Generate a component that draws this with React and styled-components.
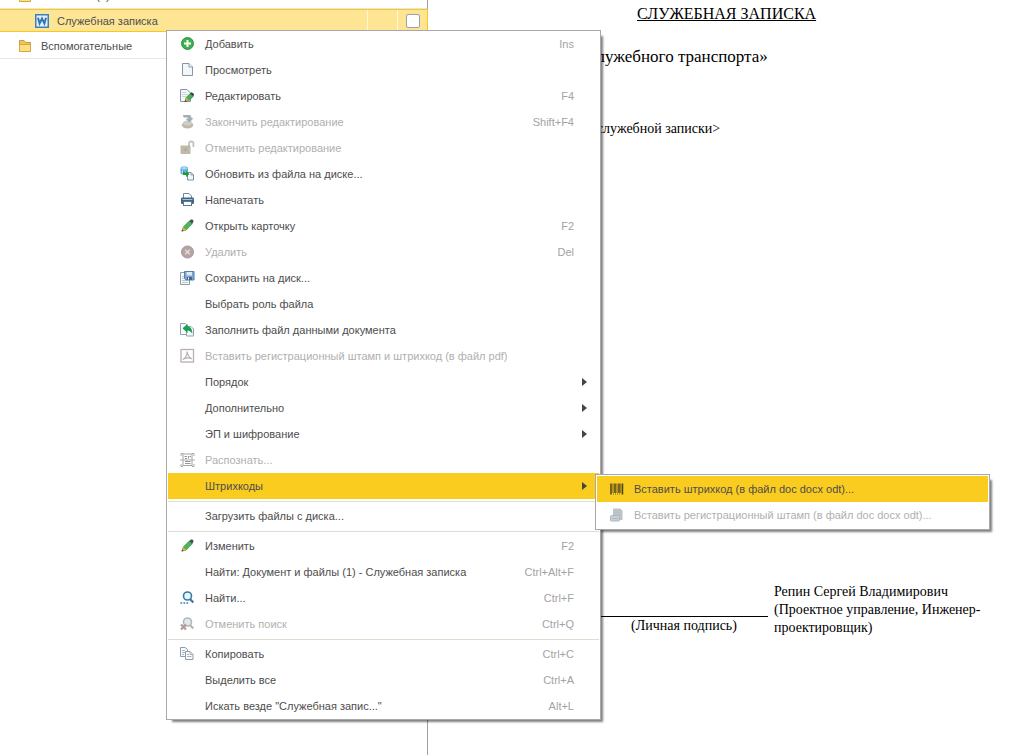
import React from 'react';
import styled, { createGlobalStyle, css } from 'styled-components';

const AddIcon = () => (
  <svg width="16" height="16" viewBox="0 0 16 16">
    <circle cx="7.500" cy="7.500" r="6" fill="#3fae4c" stroke="#2f9440" />
    <path d="M7.500 4v7M4 7.500h7" stroke="#fff" strokeWidth="2" />
  </svg>
);

const PageIcon = () => (
  <svg width="16" height="16" viewBox="0 0 16 16">
    <path d="M2.500 1.500h6.500L12.500 5v8.500h-10z" fill="#f4f7f9" stroke="#8796a5" />
    <path d="M9 1.500V5h3.500" fill="#fff" stroke="#8796a5" />
  </svg>
);

const EditPageIcon = () => (
  <svg width="16" height="16" viewBox="0 0 16 16">
    <path d="M.5 1.500H7L10.500 5v8.500H.5z" fill="#f4f7f9" stroke="#8796a5" />
    <path d="M2 4.500h4M2 6.500h6M2 8.500h4" stroke="#cdd5db" />
    <path d="M5 13.500l1.200-4 4.300-4.300 3 3-4.500 4.300z" fill="#48ae55" stroke="#2c7a3b" strokeWidth=".6" />
    <path d="M10 5.500l1.500-1.300q1.500.2 2.700 2.300L13 8.300z" fill="#31465a" />
    <path d="M5 13.500l1.200-4 3 3z" fill="#e9a13d" />
    <path d="M4.700 13.900l.5-1.800 1.400 1.300z" fill="#333" />
  </svg>
);

const FinishIcon = () => (
  <svg width="16" height="16" viewBox="0 0 16 16">
    <ellipse cx="7.500" cy="11" rx="5.800" ry="3.500" fill="#bdb9ab" />
    <ellipse cx="7.500" cy="9" rx="4.500" ry="2.500" fill="#d0cdc2" />
    <path d="M3 1h6.500q2 .2 2 3.300h2L9.500 8.500 5.500 4.800h2.500Q8 3.500 6.500 3.500H3.500z" fill="#a1aeb7" />
  </svg>
);

const UnlockIcon = () => (
  <svg width="16" height="16" viewBox="0 0 16 16">
    <path d="M9 7V3.500q0-2 2.200-2t2.200 2V7" fill="none" stroke="#c2c2be" strokeWidth="1.800" />
    <rect x=".5" y="5.500" width="10" height="8.500" rx=".8" fill="#bfb9aa" />
    <path d="M5.500 8.500V11" stroke="#a8a192" strokeWidth="1.500" />
  </svg>
);

const RefreshIcon = () => (
  <svg width="16" height="16" viewBox="0 0 16 16">
    <rect x=".5" y=".5" width="7.500" height="8" rx="2" fill="#5eacdc" />
    <ellipse cx="4.200" cy="2.200" rx="3" ry="1.300" fill="#a9daf4" />
    <path d="M2.500 4.500V7M4.500 5v1.500" stroke="#c8e8f7" />
    <path d="M7.500 6.500H11L13.500 9v5h-6z" fill="#f4f7f9" stroke="#7d90a3" />
    <path d="M11 6.500V9h2.500" fill="none" stroke="#7d90a3" strokeWidth=".8" />
    <path d="M4 5.500v2.500h3" fill="none" stroke="#1d9c35" strokeWidth="1.800" />
    <path d="M6 5l3.500 3L6 11z" fill="#1d9c35" />
  </svg>
);

const PrintIcon = () => (
  <svg width="16" height="16" viewBox="0 0 16 16">
    <path d="M3.500 6V1.500H9L11.500 4v2" fill="#fff" stroke="#72889d" />
    <rect x="1" y="5.500" width="13" height="6.500" rx="1.300" fill="#416787" />
    <path d="M2.500 7.500h10" stroke="#a4bfd2" />
    <rect x="3.500" y="9.500" width="8" height="4" fill="#fff" stroke="#5c7890" />
  </svg>
);

const PencilIcon = () => (
  <svg width="16" height="16" viewBox="0 0 16 16">
    <path d="M2 13l1.200-4 6-6 3 3-6 6z" fill="#4bb656" stroke="#3a8745" strokeWidth=".6" />
    <path d="M9.200 3l1.700-1.500q1.500-.3 2.100.3t.4 2L12.200 6z" fill="#41515e" />
    <path d="M1.800 13.200l1.300-4.200 3.200 3z" fill="#eda74b" />
    <path d="M1.500 13.500l.6-2 1.500 1.400z" fill="#4b4034" />
  </svg>
);

const DeleteIcon = () => (
  <svg width="16" height="16" viewBox="0 0 16 16">
    <circle cx="7.500" cy="8" r="6" fill="#b5a4a4" stroke="#a99999" />
    <path d="M5.200 5.700l4.600 4.600M9.800 5.700l-4.600 4.600" stroke="#e4dcdc" strokeWidth="1.400" />
  </svg>
);

const SavePageIcon = () => (
  <svg width="16" height="16" viewBox="0 0 16 16">
    <path d="M.5 2.500h9v12h-9z" fill="#f7f9fa" stroke="#8c9cac" />
    <path d="M2 6.500h3M2 8.500h3M2 10.500h5M2 12.500h6" stroke="#bcc8d1" />
    <path d="M4.500 1.500h9.500V10H6L4.500 8.500z" fill="#7ba7d2" stroke="#5580ab" />
    <rect x="6.500" y="2" width="5.500" height="3.500" fill="#dbe9f5" />
    <rect x="7" y="7" width="5" height="3" fill="#46678a" />
    <path d="M8.500 7.500v2" stroke="#fff" />
  </svg>
);

const FillIcon = () => (
  <svg width="16" height="16" viewBox="0 0 16 16">
    <path d="M.5 1.500h5L8 4v8.500H.5z" fill="#f7f9fa" stroke="#93a1af" />
    <path d="M6.500 4.500H11L13.500 7v7h-7z" fill="#f7f9fa" stroke="#93a1af" />
    <path d="M2.500 6.300L7.500 2v2.600q5 .3 4.800 7.400-1.500-3.500-4.800-3.500V11z" fill="#16a052" />
  </svg>
);

const PdfIcon = () => (
  <svg width="16" height="16" viewBox="0 0 16 16">
    <rect x="1" y="1.500" width="12.500" height="12.500" fill="#fff" stroke="#baaeae" strokeWidth="1.300" />
    <path d="M2.800 11.500Q7 9.500 7.200 3.500q.5 5.500 4.800 7.300-4.700-2-9.200.7z" fill="none" stroke="#baaeae" strokeWidth="1.200" />
  </svg>
);

const ScanIcon = () => (
  <svg width="16" height="16" viewBox="0 0 16 16">
    <path d="M1 4V1.500h2M12 1.500h2V4M1 12v2.500h2M12 14.500h2V12" fill="none" stroke="#aaa" />
    <rect x="3" y="2" width="9" height="11.500" fill="#fff" stroke="#a5a5a5" />
    <path d="M4.500 4.500H7M8.500 4v2.500M9.500 4.500h1.500M5 6.500h2M5 9.500h5.500M5 11.500h5.500" stroke="#959595" />
    <path d="M0 8h15" stroke="#b9a9a9" />
  </svg>
);

const SearchIcon = () => (
  <svg width="16" height="16" viewBox="0 0 16 16">
    <circle cx="7.500" cy="6" r="4" fill="#edf5fa" stroke="#367ba8" strokeWidth="1.600" />
    <path d="M10 9l3.300 3.500" stroke="#367ba8" strokeWidth="2.200" />
    <path d="M.5 13h1.700M3.500 13h1.700M6.500 13h1.700" stroke="#367ba8" strokeWidth="1.500" />
  </svg>
);

const SearchOffIcon = () => (
  <svg width="16" height="16" viewBox="0 0 16 16">
    <circle cx="7.500" cy="6" r="4" fill="#e4e8ea" stroke="#b1b9be" strokeWidth="1.600" />
    <path d="M10 9l3.300 3.500" stroke="#b1b9be" strokeWidth="2.200" />
    <path d="M1 8.500l5 5M6 8.500l-5 5" stroke="#b29a98" strokeWidth="2.200" />
  </svg>
);

const CopyIcon = () => (
  <svg width="16" height="16" viewBox="0 0 16 16">
    <path d="M.5 1.500h4.500l2.500 2v7h-7z" fill="#f8fafb" stroke="#8d9baa" />
    <path d="M2 4.500h3M2 6.500h3M2 8.500h2" stroke="#a9b5c0" />
    <path d="M5.500 5.500h4.500l3 3v5H5.500z" fill="#f8fafb" stroke="#8d9baa" />
    <path d="M10 5.500v3h3M7 8.500h2M7 10.500h4.500" fill="none" stroke="#a9b5c0" />
  </svg>
);

const BarcodeIcon = () => (
  <svg width="16" height="16" viewBox="0 0 16 16">
    <path d="M2 2.500V13.500M6 2.500v9.500M10 2.500v9.500M13.500 2.500V13.500" stroke="#4c431c" strokeWidth="1.500" />
    <path d="M4 2.500v9.500M8 2.500v9.500M11.800 2.500v9.500" stroke="#4c431c" strokeWidth=".8" />
    <path d="M4 13h8.500" stroke="#7a6a20" strokeDasharray="1 1" />
  </svg>
);

const StampIcon = () => (
  <svg width="16" height="16" viewBox="0 0 16 16">
    <path d="M4 2.500q0-1 1-1h6l2.500 2V13H4z" fill="#bac3ca" />
    <rect x="1.500" y="8.500" width="9" height="5.500" rx="1" fill="#c8d0d6" stroke="#aeb8c0" />
    <path d="M3.500 11.500H9" stroke="#aeb8c0" />
  </svg>
);

const WordIcon = () => (
  <svg width="14" height="14" viewBox="0 0 14 14">
    <rect x=".75" y=".75" width="12.500" height="12.500" fill="#e9f0f5" stroke="#3a7fc1" strokeWidth="1.500" />
    <path d="M3 3.800l1.600 5.700L7 4.500l2.400 5L11 3.800" fill="none" stroke="#2f75b8" strokeWidth="2" />
  </svg>
);

const FolderIcon = () => (
  <svg width="14" height="14" viewBox="0 0 14 14">
    <path d="M1.500 11.500v-10h4.500L7.500 3.500h5v8z" fill="#f2c455" stroke="#c99b3f" />
    <path d="M1.500 12.500v-7h11v7z" fill="#ffe07d" stroke="#d2a546" />
  </svg>
);

const menuItems = [
  { label: 'Добавить', hotkey: 'Ins', icon: AddIcon },
  { label: 'Просмотреть', icon: PageIcon },
  { label: 'Редактировать', hotkey: 'F4', icon: EditPageIcon },
  { label: 'Закончить редактирование', hotkey: 'Shift+F4', icon: FinishIcon, disabled: true },
  { label: 'Отменить редактирование', icon: UnlockIcon, disabled: true },
  { label: 'Обновить из файла на диске...', icon: RefreshIcon },
  { label: 'Напечатать', icon: PrintIcon },
  { label: 'Открыть карточку', hotkey: 'F2', icon: PencilIcon },
  { label: 'Удалить', hotkey: 'Del', icon: DeleteIcon, disabled: true },
  { label: 'Сохранить на диск...', icon: SavePageIcon },
  { label: 'Выбрать роль файла' },
  { label: 'Заполнить файл данными документа', icon: FillIcon },
  { label: 'Вставить регистрационный штамп и штрихкод (в файл pdf)', icon: PdfIcon, disabled: true },
  { label: 'Порядок', arrow: true },
  { label: 'Дополнительно', arrow: true },
  { label: 'ЭП и шифрование', arrow: true },
  { label: 'Распознать...', icon: ScanIcon, disabled: true },
  {
    label: 'Штрихкоды',
    arrow: true,
    active: true,
    children: [
      { label: 'Вставить штрихкод (в файл doc docx odt)...', icon: BarcodeIcon, active: true },
      { label: 'Вставить регистрационный штамп (в файл doc docx odt)...', icon: StampIcon, disabled: true },
    ],
  },
  { separator: true },
  { label: 'Загрузить файлы с диска...' },
  { separator: true },
  { label: 'Изменить', hotkey: 'F2', icon: PencilIcon },
  { label: 'Найти: Документ и файлы (1) - Служебная записка', hotkey: 'Ctrl+Alt+F' },
  { label: 'Найти...', hotkey: 'Ctrl+F', icon: SearchIcon },
  { label: 'Отменить поиск', hotkey: 'Ctrl+Q', icon: SearchOffIcon, disabled: true },
  { separator: true },
  { label: 'Копировать', hotkey: 'Ctrl+C', icon: CopyIcon },
  { label: 'Выделить все', hotkey: 'Ctrl+A' },
  { label: 'Искать везде "Служебная запис..."', hotkey: 'Alt+L' },
];

const MenuEntry = ({ item }) => {
  if (item.separator) return <Separator role="separator" />;
  const Icon = item.icon;
  return (
    <MenuCell role="none">
      <MenuButton type="button" role="menuitem" disabled={item.disabled} $active={item.active}>
        <IconSlot>{Icon && <Icon />}</IconSlot>
        <MenuLabel>{item.label}</MenuLabel>
        {item.hotkey && <Hotkey>{item.hotkey}</Hotkey>}
        <ArrowSlot>
          {item.arrow && (
            <svg width="5" height="8" viewBox="0 0 5 8">
              <path d="M0 0l5 4-5 4z" fill="#444" />
            </svg>
          )}
        </ArrowSlot>
      </MenuButton>
      {item.children && (
        <SubMenu role="menu">
          {item.children.map((child) => (
            <MenuEntry key={child.label} item={child} />
          ))}
        </SubMenu>
      )}
    </MenuCell>
  );
};

const App = () => {
  return (
    <>
      <GlobalStyle />
      <Workspace>
        {/* File tree */}
        <FilePanel>
          <FileList>
            <FileRow>
              <FolderIcon />
              <FileName>Основные (1)</FileName>
            </FileRow>
            <FileRow $selected>
              <WordIcon />
              <FileName>Служебная записка</FileName>
              <FlagCell />
              <FlagCell>
                <FlagBox type="checkbox" aria-label="Отметить файл" />
              </FlagCell>
            </FileRow>
            <FileRow>
              <FolderIcon />
              <FileName>Вспомогательные</FileName>
            </FileRow>
          </FileList>
        </FilePanel>

        {/* Document preview */}
        <Preview>
          <Heading>СЛУЖЕБНАЯ ЗАПИСКА</Heading>
          <Subject>служебного транспорта»</Subject>
          <Content>&lt;служебной записки&gt;</Content>
          <Signature>
            <SignLine>(Личная подпись)</SignLine>
            <Signer>
              Репин Сергей Владимирович
              <br />
              (Проектное управление, Инженер-
              <br />
              проектировщик)
            </Signer>
          </Signature>
        </Preview>

        {/* Context menu */}
        <ContextMenu role="menu">
          {menuItems.map((item, i) => (
            <MenuEntry key={i} item={item} />
          ))}
        </ContextMenu>
      </Workspace>
    </>
  );
};

export default App;

// Styled Components
const GlobalStyle = createGlobalStyle`
  * {
    box-sizing: border-box;
  }

  body {
    margin: 0;
    background: #fff;
    font-family: 'Liberation Sans', Arial, sans-serif;
    font-size: 11px;
    color: #4d4d4d;
  }
`;

const Workspace = styled.div`
  position: relative;
  display: flex;
  min-height: 100vh;
`;

const FilePanel = styled.aside`
  flex: 0 0 428px;
  border-right: 1px solid #a0a0a0;
`;

const FileList = styled.ul`
  display: flex;
  flex-direction: column;
  justify-content: flex-end;
  height: 59px;
  margin: 0 -1px 0 0;
  padding: 0;
  list-style: none;
  overflow: hidden;
`;

const FileRow = styled.li`
  display: flex;
  flex: none;
  align-items: center;
  gap: 9px;
  height: 25px;
  margin-right: 1px;
  padding-left: 18px;
  border-bottom: 1px solid #e6e6e6;

  ${({ $selected }) =>
    $selected &&
    css`
      height: 23px;
      margin: 0 0 2px;
      padding-left: 35px;
      gap: 8px;
      background: #fde593;
      border: 1px solid #f8c81c;
      border-width: 1px 1px 1px 0;
    `}
`;

const FileName = styled.span`
  flex: 1;
`;

const FlagCell = styled.span`
  display: flex;
  align-items: center;
  justify-content: center;
  align-self: stretch;
  width: 30px;
  margin-left: -6px;
  border-left: 1px solid #fff6d8;

  & + & {
    margin-left: -8px;
  }
`;

const FlagBox = styled.input`
  appearance: none;
  width: 14px;
  height: 14px;
  margin: 0;
  background: #fff;
  border: 1px solid #a0a0a0;
  border-radius: 2px;
`;

const Preview = styled.main`
  flex: 1;
  padding: 5px 0 0 161px;
  font-family: 'Liberation Serif', 'Times New Roman', serif;
  color: #000;
`;

const Heading = styled.h1`
  margin: 0 0 24px 48px;
  font-size: 16px;
  font-weight: normal;
  line-height: 18px;
  text-decoration: underline;
`;

const Subject = styled.p`
  margin: 0 0 53px;
  font-size: 17px;
  line-height: 20px;
`;

const Content = styled.p`
  margin: 0;
  font-size: 14px;
  line-height: 18px;
`;

const Signature = styled.section`
  display: grid;
  grid-template-columns: 168px 1fr;
  column-gap: 6px;
  margin: 445px 0 0 11px;
  font-size: 14px;
  line-height: 18px;
`;

const SignLine = styled.div`
  margin-top: 33px;
  border-top: 1px solid #000;
  text-align: center;
`;

const Signer = styled.div`
  white-space: nowrap;
`;

const menuBox = css`
  position: absolute;
  margin: 0;
  list-style: none;
  background: #fff;
  border: 1px solid #a8a8a8;
  box-shadow: 4px 4px 2px -2px rgba(0, 0, 0, 0.5);
`;

const ContextMenu = styled.ul`
  ${menuBox}
  top: 30px;
  left: 166px;
  width: 435px;
  padding: 0 1px;
`;

const SubMenu = styled.ul`
  ${menuBox}
  top: 1px;
  left: 427px;
  z-index: 1;
  width: 395px;
  padding: 1px;
`;

const MenuCell = styled.li`
  position: relative;
`;

const MenuButton = styled.button`
  display: flex;
  align-items: center;
  width: 100%;
  height: 26px;
  padding: 0 0 0 12px;
  background: ${({ $active }) => ($active ? '#facc20' : 'transparent')};
  border: none;
  font: inherit;
  color: #4d4d4d;
  text-align: left;
  white-space: nowrap;

  &:disabled {
    color: #b0b0b0;
  }
`;

const IconSlot = styled.span`
  display: flex;
  width: 16px;
  margin-right: 9px;
`;

const MenuLabel = styled.span`
  flex: 1;
`;

const Hotkey = styled.span`
  color: #a3a3a3;
`;

const ArrowSlot = styled.span`
  display: flex;
  width: 25px;
  padding-left: 8px;
`;

const Separator = styled.li`
  height: 4px;
  background: linear-gradient(#deddd2, #deddd2) 0 2px / 100% 1px no-repeat;
`;
